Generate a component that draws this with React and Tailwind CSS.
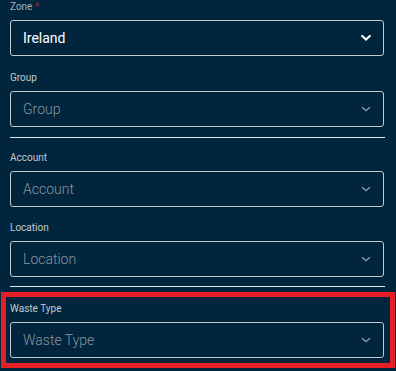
import React from "react";

function Chevron({ strong }) {
  return strong ? (
    <svg width="10" height="6" viewBox="0 0 10 6" className="shrink-0">
      <polyline points="1.2,1 5,4.6 8.8,1" fill="none" stroke="#ffffff" strokeWidth="2" strokeLinecap="square" />
    </svg>
  ) : (
    <svg width="10" height="6" viewBox="0 0 10 6" className="shrink-0">
      <polyline points="1,1.2 5,4.6 9,1.2" fill="none" stroke="#8b97a2" strokeWidth="1.3" />
    </svg>
  );
}

function Field({ label, value, placeholder, required, className = "", labelColor = "text-[#c2c9cf]" }) {
  return (
    <div className={"flex flex-col " + className}>
      <div className={"h-[12px] text-[10px] leading-[12px] " + labelColor}>
        {label}
        {required && <span className="text-[#a31d25]"> *</span>}
      </div>
      <div className="mt-[7px] flex h-[36px] items-center justify-between rounded-[3px] border border-[#c3c9ce] pl-[12px] pr-[12px]">
        {value ? (
          <span className="text-[14px] text-white">{value}</span>
        ) : (
          <span className="text-[14px] font-light text-[#8a96a0]">{placeholder}</span>
        )}
        <Chevron strong={!!value} />
      </div>
    </div>
  );
}

export default function App() {
  return (
    <div
      className="h-[371px] w-[396px] overflow-hidden bg-[#00253d] pl-[10px] pr-[12px] pt-[1px]"
      style={{ fontFamily: "Roboto, 'Noto Sans', sans-serif" }}
    >
      <Field label="Zone" value="Ireland" required labelColor="text-[#a3adb6]" />
      <Field label="Group" placeholder="Group" className="mt-[16px]" />
      <div className="mr-[-1px] mt-[10px] h-px bg-[#e2e6ea]" />
      <Field label="Account" placeholder="Account" className="mt-[14px]" />
      <Field label="Location" placeholder="Location" className="mt-[15px]" />
      <div className="mr-[-1px] mt-[9px] h-px bg-[#e2e6ea]" />
      <div className="ml-[-9px] mr-[-11px] mt-[5px] border-[5px] border-[#e61e26] pb-[5px] pl-[4px] pr-[6px] pt-[6px]">
        <Field label="Waste Type" placeholder="Waste Type" />
      </div>
    </div>
  );
}
